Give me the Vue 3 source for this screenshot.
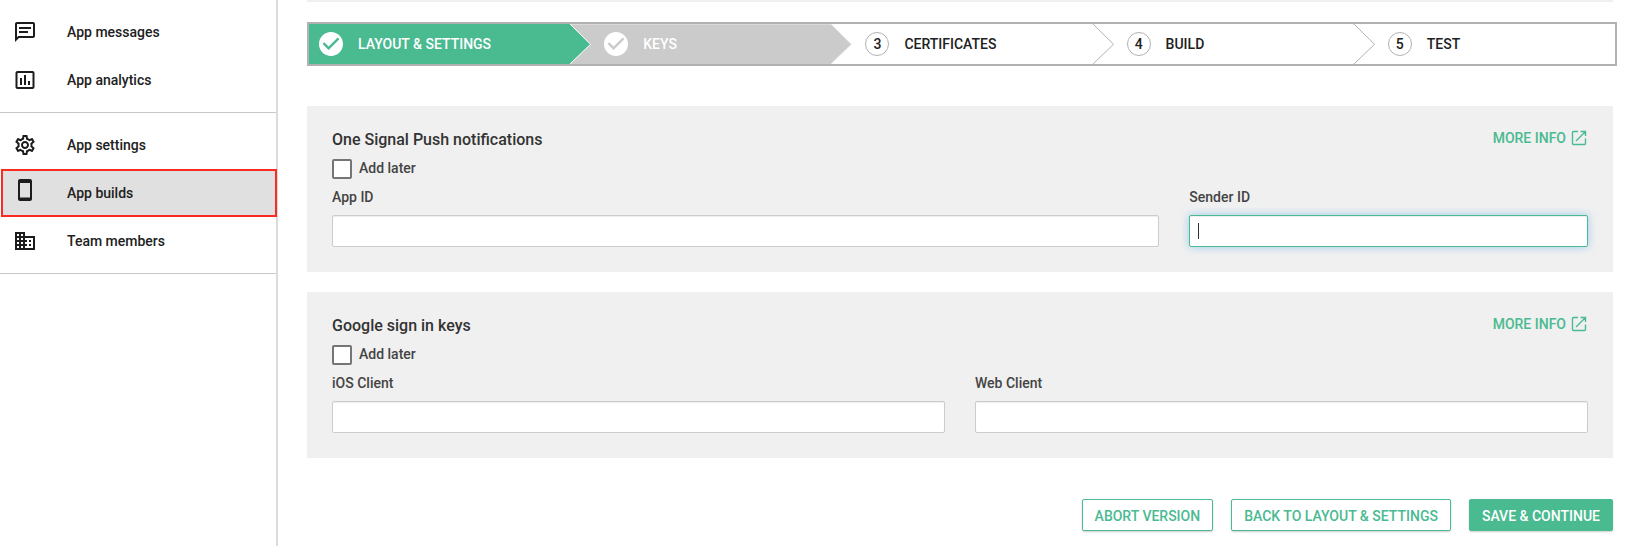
<script setup>
import { ref, onMounted } from 'vue'

const navGroups = [
  [
    { label: 'App messages', kind: 'chat' },
    { label: 'App analytics', kind: 'chart' },
  ],
  [
    { label: 'App settings', kind: 'gear' },
    { label: 'App builds', kind: 'phone', active: true },
    { label: 'Team members', kind: 'building' },
  ],
]

const steps = [
  { label: 'LAYOUT & SETTINGS', state: 'done' },
  { label: 'KEYS', state: 'current' },
  { label: 'CERTIFICATES', state: 'todo' },
  { label: 'BUILD', state: 'todo' },
  { label: 'TEST', state: 'todo' },
]

const panels = [
  {
    id: 'onesignal',
    title: 'One Signal Push notifications',
    fields: [
      { id: 'app-id', label: 'App ID', size: 'wide' },
      { id: 'sender-id', label: 'Sender ID', size: 'narrow', focused: true },
    ],
  },
  {
    id: 'google',
    title: 'Google sign in keys',
    fields: [
      { id: 'ios-client', label: 'iOS Client', size: 'half' },
      { id: 'web-client', label: 'Web Client', size: 'half' },
    ],
  },
]

const values = ref({})
const later = ref({ onesignal: false, google: false })
onMounted(() => document.getElementById('sender-id')?.focus())
</script>

<template>
  <div class="page">
    <nav class="sidebar" aria-label="App">
      <ul v-for="(group, g) in navGroups" :key="g" class="group">
        <li v-for="item in group" :key="item.label">
          <a href="#" class="item" :class="{ active: item.active }">
            <svg class="icon" viewBox="0 0 24 24" aria-hidden="true">
              <path v-if="item.kind === 'chat'" d="M4 4h16v12H5.17L4 17.17V4m0-2c-1.1 0-1.99.9-1.99 2L2 22l4-4h14c1.1 0 2-.9 2-2V4c0-1.1-.9-2-2-2H4zm2 9h9v2H6v-2zm0-4h12v2H6V7z" />
              <path v-else-if="item.kind === 'chart'" d="M9 17H7v-7h2v7zm4 0h-2V7h2v10zm4 0h-2v-4h2v4zm2.500 2.100h-15V5h15v14.100zm0-16.100h-15c-1.100 0-2 .9-2 2v14c0 1.100.9 2 2 2h15c1.100 0 2-.9 2-2V5c0-1.100-.9-2-2-2z" />
              <path v-else-if="item.kind === 'gear'" d="M19.430 12.980c.04-.32.07-.64.07-.98 0-.34-.03-.66-.07-.98l2.110-1.650c.19-.15.24-.42.12-.64l-2-3.460c-.09-.16-.26-.25-.44-.25-.06 0-.12.01-.17.03l-2.490 1c-.52-.4-1.080-.73-1.690-.98l-.38-2.650C14.460 2.180 14.250 2 14 2h-4c-.25 0-.46.18-.49.42l-.38 2.650c-.61.25-1.170.59-1.690.98l-2.490-1c-.06-.02-.12-.03-.18-.03-.17 0-.34.09-.43.25l-2 3.460c-.13.22-.07.49.12.64l2.110 1.650c-.04.32-.07.65-.07.98 0 .33.03.66.07.98l-2.110 1.650c-.19.15-.24.42-.12.64l2 3.460c.09.16.26.25.44.25.06 0 .12-.01.17-.03l2.490-1c.52.4 1.080.73 1.690.98l.38 2.650c.03.24.24.42.49.42h4c.25 0 .46-.18.49-.42l.38-2.650c.61-.25 1.170-.59 1.690-.98l2.490 1c.06.02.12.03.18.03.17 0 .34-.09.43-.25l2-3.460c.12-.22.07-.49-.12-.64l-2.110-1.650zm-1.980-1.710c.04.31.05.52.05.73 0 .21-.02.43-.05.73l-.14 1.130.89.7 1.080.84-.7 1.210-1.270-.51-1.040-.42-.9.68c-.43.32-.84.56-1.250.73l-1.060.43-.16 1.130-.2 1.350h-1.400l-.19-1.350-.16-1.130-1.060-.43c-.43-.18-.83-.41-1.230-.71l-.91-.7-1.060.43-1.270.51-.7-1.210 1.080-.84.89-.7-.14-1.130c-.03-.31-.05-.54-.05-.74s.02-.43.05-.73l.14-1.130-.89-.7-1.080-.84.7-1.210 1.270.51 1.040.42.9-.68c.43-.32.84-.56 1.250-.73l1.060-.43.16-1.130.2-1.350h1.390l.19 1.350.16 1.130 1.060.43c.43.18.83.41 1.230.71l.91.7 1.060-.43 1.270-.51.7 1.210-1.070.85-.89.7.14 1.130zM12 8c-2.210 0-4 1.790-4 4s1.790 4 4 4 4-1.790 4-4-1.790-4-4-4zm0 6c-1.100 0-2-.9-2-2s.9-2 2-2 2 .9 2 2-.9 2-2 2z" />
              <path v-else-if="item.kind === 'phone'" d="M17-2H7C5.900-2 5-1.100 5 0v18c0 1.100.9 2 2 2h10c1.100 0 2-.9 2-2V0c0-1.100-.9-2-2-2zm0 18.500H7V2h10v14.500z" />
              <path v-else d="M12 7V3H2v18h20V7H12zM6 19H4v-2h2v2zm0-4H4v-2h2v2zm0-4H4V9h2v2zm0-4H4V5h2v2zm4 12H8v-2h2v2zm0-4H8v-2h2v2zm0-4H8V9h2v2zm0-4H8V5h2v2zm10 12h-8v-2h2v-2h-2v-2h2v-2h-2V9h8v10zm-2-8h-2v2h2v-2zm0 4h-2v2h2v-2z" />
            </svg>
            <span>{{ item.label }}</span>
          </a>
        </li>
      </ul>
    </nav>

    <main class="main">
      <div class="strip"></div>
      <ol class="steps">
        <li v-for="(step, i) in steps" :key="step.label" class="step" :class="step.state">
          <button type="button" class="step-button">
            <span v-if="step.state === 'todo'" class="number">{{ i + 1 }}</span>
            <svg v-else class="tick" viewBox="2 2 20 20" aria-hidden="true">
              <path d="M12 2C6.480 2 2 6.480 2 12s4.480 10 10 10 10-4.480 10-10S17.520 2 12 2zm-2 15l-5-5 1.410-1.410L10 14.170l7.590-7.590L19 8l-9 9z" />
            </svg>
            <span>{{ step.label }}</span>
          </button>
          <svg v-if="i < steps.length - 1" class="arrow" viewBox="0 0 22 40" aria-hidden="true">
            <path d="M0 0L20.500 20.300L0 40" />
          </svg>
        </li>
      </ol>

      <section v-for="panel in panels" :key="panel.id" class="panel">
        <header class="panel-head">
          <h2>{{ panel.title }}</h2>
          <a href="#" class="more">
            <span>MORE INFO</span>
            <svg viewBox="0 0 16 16" aria-hidden="true">
              <path d="M7 1.500H2.500a1 1 0 0 0-1 1V13.500a1 1 0 0 0 1 1H13.500a1 1 0 0 0 1-1V8.500M9.500 1.500H14.500V6M14.500 1.500L5 11" />
            </svg>
          </a>
        </header>
        <label class="later">
          <input v-model="later[panel.id]" type="checkbox" />
          <span>Add later</span>
        </label>
        <div class="fields">
          <div v-for="field in panel.fields" :key="field.id" class="field" :class="field.size">
            <label :for="field.id">{{ field.label }}</label>
            <div class="control">
              <input :id="field.id" v-model="values[field.id]" type="text" :class="{ focused: field.focused }" />
              <span v-if="field.focused" class="caret"></span>
            </div>
          </div>
        </div>
      </section>

      <footer class="actions">
        <button type="button" class="btn">ABORT VERSION</button>
        <button type="button" class="btn">BACK TO LAYOUT &amp; SETTINGS</button>
        <button type="button" class="btn primary">SAVE &amp; CONTINUE</button>
      </footer>
    </main>
  </div>
</template>

<style>
body {
  margin: 0;
  background: #fff;
}
</style>

<style scoped>
* {
  box-sizing: border-box;
}
.page {
  display: flex;
  min-height: 100vh;
  font: 500 14px/20px Roboto, "Liberation Sans", sans-serif;
  color: #212121;
}
a {
  color: inherit;
  text-decoration: none;
}
button,
input {
  font: inherit;
}
.sidebar {
  flex: none;
  width: 278px;
  border-right: 2px solid #dcdcdc;
}
.group {
  margin: 0;
  padding: 8px 0;
  list-style: none;
  border-bottom: 1px solid #c8c8c8;
}
.item {
  display: flex;
  align-items: center;
  gap: 30px;
  height: 48px;
  padding-left: 13px;
}
.item.active {
  margin: 0 -1px 0 1px;
  padding-left: 10px;
  background: #e0e0e0;
  border: 2px solid #fa2b20;
}
.icon {
  width: 24px;
  height: 24px;
  overflow: visible;
  fill: #1c1c1c;
}
.main {
  flex: 1;
  min-width: 0;
  padding: 0 27px 14px 29px;
}
.strip {
  height: 2px;
  background: #f0f0f0;
}
.steps {
  display: flex;
  margin: 20px -4px 40px 0;
  padding: 0;
  list-style: none;
  border: 2px solid #b2b2b2;
}
.step {
  position: relative;
  flex: 1;
  height: 40px;
}
.step-button {
  display: flex;
  align-items: center;
  gap: 15px;
  width: 100%;
  height: 100%;
  padding: 0 0 0 34px;
  border: 0;
  background: #fff;
  color: #212121;
}
.step:first-child .step-button {
  padding-left: 10px;
}
.done .step-button {
  background: #4aba91;
  color: #fff;
}
.current .step-button {
  background: #cbcbcb;
  box-shadow: inset 0 1px #dadada;
  color: #fff;
}
.number {
  width: 24px;
  height: 24px;
  border: 1px solid #b2b2b2;
  border-radius: 50%;
  line-height: 22px;
  text-align: center;
}
.tick {
  width: 24px;
  height: 24px;
  fill: #fff;
}
.arrow {
  position: absolute;
  z-index: 1;
  top: 0;
  left: 100%;
  width: 22px;
  height: 40px;
  fill: #fff;
  stroke: #b2b2b2;
}
.done .arrow {
  fill: #4aba91;
  stroke: #fff;
}
.current .arrow {
  fill: #cbcbcb;
  stroke: #eee;
}
.panel {
  margin-bottom: 20px;
  padding: 23px 25px 25px;
  background: #f0f0f0;
}
.panel-head {
  display: flex;
  justify-content: space-between;
}
h2 {
  margin: 0;
  font-size: 16px;
  font-weight: 500;
  line-height: 22px;
  color: #333;
}
.more {
  display: flex;
  align-items: center;
  gap: 5px;
  height: 18px;
  padding-right: 1px;
  color: #4aba91;
}
.more svg {
  width: 16px;
  height: 16px;
  fill: none;
  stroke: currentColor;
  stroke-width: 1.4;
}
.later {
  display: flex;
  width: max-content;
  gap: 7px;
  margin-top: 8px;
  line-height: 18px;
  color: #444;
}
.later input {
  appearance: none;
  width: 20px;
  height: 20px;
  margin: 0;
  background: #fff;
  border: 2px solid #757575;
  border-radius: 2px;
}
.later input:checked {
  background: #4aba91;
}
.fields {
  display: grid;
  grid-template-columns: repeat(12, 1fr);
  column-gap: 30px;
  margin-top: 8px;
}
.wide {
  grid-column: span 8;
}
.narrow {
  grid-column: span 4;
}
.half {
  grid-column: span 6;
}
.field label {
  display: block;
  margin-bottom: 8px;
  color: #444;
}
.control {
  position: relative;
}
.control input {
  display: block;
  width: 100%;
  height: 32px;
  padding: 0 8px;
  background: #fff;
  border: 1px solid #ccc;
  border-radius: 2px;
  box-shadow: inset 0 1px 1px rgba(0, 0, 0, 0.075);
  outline: 0;
}
.control input.focused {
  border-color: #4aba91;
  box-shadow: inset 0 1px 1px rgba(0, 0, 0, 0.075), 0 0 8px rgba(102, 175, 233, 0.6);
  caret-color: transparent;
}
.caret {
  position: absolute;
  top: 8px;
  left: 9px;
  width: 1px;
  height: 16px;
  background: #333;
}
.actions {
  display: flex;
  justify-content: flex-end;
  gap: 18px;
  margin-top: 41px;
}
.btn {
  height: 32px;
  padding: 1px 12px 0;
  background: #fff;
  border: 1px solid #4aba91;
  border-radius: 2px;
  box-shadow: 0 1px 2px rgba(0, 0, 0, 0.2);
  color: #4aba91;
}
.btn.primary {
  background: #4aba91;
  color: #fff;
}
</style>
